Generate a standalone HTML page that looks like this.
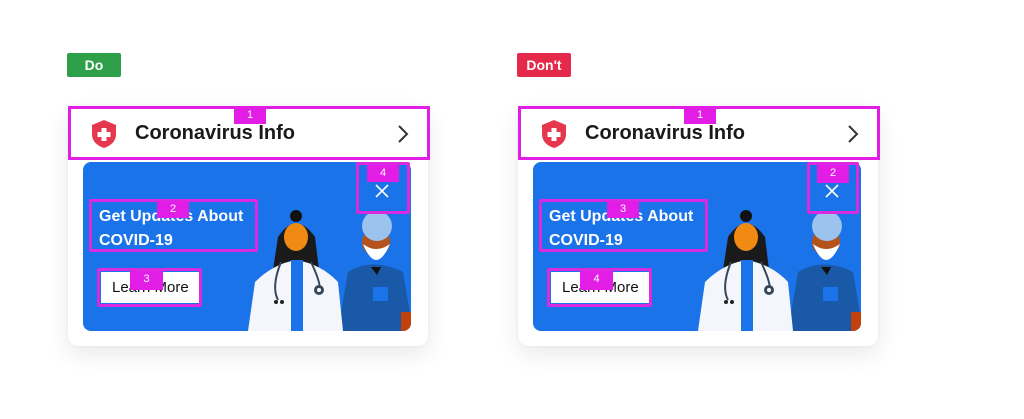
<!DOCTYPE html>
<html><head><meta charset="utf-8"><style>
*{margin:0;padding:0;box-sizing:border-box}
body{width:1024px;height:419px;background:#fff;position:relative;overflow:hidden;font-family:"Liberation Sans",Arial,sans-serif}
.a{position:absolute}
.lbl{color:#fff;font-weight:bold;font-size:14px;text-align:center;line-height:24px;border-radius:2px}
.card{width:360px;height:240px;background:#fff;border-radius:10px;box-shadow:0 8px 24px rgba(0,0,0,.09),0 0 3px rgba(0,0,0,.06)}
.hdr{border:3px solid #e21ee6;background:#fff}
.title{font-size:20px;font-weight:bold;color:#1a1a1a}
.blue{background:#1a73e8;border-radius:8px;overflow:hidden}
.mb{border:3px solid #d92ae0;border-radius:2px}
.tag{background:#e21ee6;color:#fff;font-size:11px;text-align:center;line-height:16px}
.h{color:#fff;font-weight:bold;font-size:16px;line-height:24px}
.btn{background:#fff;color:#111;font-size:15px;line-height:32px}
</style></head><body>

<div class="a lbl" style="left:67px;top:53px;width:54px;height:24px;background:#2ea04a">Do</div>
<div class="a lbl" style="left:517px;top:53px;width:54px;height:24px;background:#e5294b">Don't</div>

<div id="c1">
<div class="a card" style="left:68px;top:106px"></div>
<div class="a blue" style="left:83px;top:162px;width:328px;height:169px">
 <svg width="328" height="169" style="position:absolute;left:0;top:0">
  <path d="M265 110 Q290 95 320 110 L330 169 L255 169Z" fill="#1a58a8"/>
  <rect x="290" y="125" width="15" height="14" fill="#1a73e8"/>
  <rect x="318" y="150" width="10" height="19" fill="#c2410c"/>
  <circle cx="293" cy="80" r="14" fill="#b4541c"/>
  <circle cx="294" cy="64" r="15" fill="#9cc2ee"/>
  <path d="M280 82 Q293 114 307 82 Q293 92 280 82Z" fill="#fff"/>
  <path d="M288 105 L298 105 L294 113Z" fill="#111"/>
  <circle cx="213" cy="54" r="6" fill="#111"/>
  <path d="M195 75 Q213 48 232 75 L236 108 L190 108Z" fill="#1a1a1a"/>
  <ellipse cx="213" cy="75" rx="12" ry="14" fill="#f08a12"/>
  <path d="M165 169 L172 120 Q190 102 213 98 Q238 102 255 120 L260 169Z" fill="#f4f6fb"/>
  <rect x="208" y="98" width="12" height="71" fill="#1a73e8"/>
  <path d="M198 100 Q188 125 195 138 M228 100 Q240 125 236 132" stroke="#33475b" stroke-width="2" fill="none"/>
  <circle cx="236" cy="128" r="5" fill="#33475b"/><circle cx="236" cy="128" r="2" fill="#fff"/>
  <circle cx="193" cy="140" r="2" fill="#222"/><circle cx="199" cy="140" r="2" fill="#222"/>
 </svg>
</div>
<div class="a hdr" style="left:68px;top:106px;width:362px;height:54px"></div>
<svg class="a" style="left:90px;top:119px" width="28" height="30" viewBox="0 0 28 30"><path d="M14 1 L26 6 L26 15 Q26 25 14 29 Q2 25 2 15 L2 6Z" fill="#e5384f"/><rect x="11.5" y="9" width="5" height="13" fill="#fff"/><rect x="7.5" y="13" width="13" height="5" fill="#fff"/></svg>
<div class="a title" style="left:135px;top:122px">Coronavirus Info</div>
<svg class="a" style="left:396px;top:124px" width="14" height="20"><path d="M3 2 L11 10 L3 18" stroke="#333" stroke-width="2" fill="none"/></svg>
<div class="a tag" style="left:234px;top:107px;width:32px;height:17px">1</div>
<div class="a h" style="left:99px;top:205px">Get Updates About<br>COVID-19</div>
<div class="a btn" style="left:101px;top:272px;width:98px;height:31px;padding-left:11px">Learn More</div>
<svg class="a" style="left:375px;top:184px" width="14" height="14"><path d="M1 1L13 13M13 1L1 13" stroke="#fff" stroke-width="1.6"/></svg>
</div>

<div id="c2">
<div class="a card" style="left:518px;top:106px"></div>
<div class="a blue" style="left:533px;top:162px;width:328px;height:169px">
 <svg width="328" height="169" style="position:absolute;left:0;top:0">
  <path d="M265 110 Q290 95 320 110 L330 169 L255 169Z" fill="#1a58a8"/>
  <rect x="290" y="125" width="15" height="14" fill="#1a73e8"/>
  <rect x="318" y="150" width="10" height="19" fill="#c2410c"/>
  <circle cx="293" cy="80" r="14" fill="#b4541c"/>
  <circle cx="294" cy="64" r="15" fill="#9cc2ee"/>
  <path d="M280 82 Q293 114 307 82 Q293 92 280 82Z" fill="#fff"/>
  <path d="M288 105 L298 105 L294 113Z" fill="#111"/>
  <circle cx="213" cy="54" r="6" fill="#111"/>
  <path d="M195 75 Q213 48 232 75 L236 108 L190 108Z" fill="#1a1a1a"/>
  <ellipse cx="213" cy="75" rx="12" ry="14" fill="#f08a12"/>
  <path d="M165 169 L172 120 Q190 102 213 98 Q238 102 255 120 L260 169Z" fill="#f4f6fb"/>
  <rect x="208" y="98" width="12" height="71" fill="#1a73e8"/>
  <path d="M198 100 Q188 125 195 138 M228 100 Q240 125 236 132" stroke="#33475b" stroke-width="2" fill="none"/>
  <circle cx="236" cy="128" r="5" fill="#33475b"/><circle cx="236" cy="128" r="2" fill="#fff"/>
  <circle cx="193" cy="140" r="2" fill="#222"/><circle cx="199" cy="140" r="2" fill="#222"/>
 </svg>
</div>
<div class="a hdr" style="left:518px;top:106px;width:362px;height:54px"></div>
<svg class="a" style="left:540px;top:119px" width="28" height="30" viewBox="0 0 28 30"><path d="M14 1 L26 6 L26 15 Q26 25 14 29 Q2 25 2 15 L2 6Z" fill="#e5384f"/><rect x="11.5" y="9" width="5" height="13" fill="#fff"/><rect x="7.5" y="13" width="13" height="5" fill="#fff"/></svg>
<div class="a title" style="left:585px;top:122px">Coronavirus Info</div>
<svg class="a" style="left:846px;top:124px" width="14" height="20"><path d="M3 2 L11 10 L3 18" stroke="#333" stroke-width="2" fill="none"/></svg>
<div class="a tag" style="left:684px;top:107px;width:32px;height:17px">1</div>
<div class="a h" style="left:549px;top:205px">Get Updates About<br>COVID-19</div>
<div class="a btn" style="left:551px;top:272px;width:98px;height:31px;padding-left:11px">Learn More</div>
<svg class="a" style="left:825px;top:184px" width="14" height="14"><path d="M1 1L13 13M13 1L1 13" stroke="#fff" stroke-width="1.6"/></svg>
</div>

<div class="a mb" style="left:89px;top:199px;width:169px;height:53px"></div>
<div class="a mb" style="left:97px;top:268px;width:105px;height:39px"></div>
<div class="a mb" style="left:356px;top:162px;width:54px;height:52px"></div>
<div class="a tag" style="left:157px;top:201px;width:32px;height:17px">2</div>
<div class="a tag" style="left:130px;top:271px;width:33px;height:19px">3</div>
<div class="a tag" style="left:367px;top:165px;width:32px;height:17px">4</div>
<div class="a mb" style="left:539px;top:199px;width:169px;height:53px"></div>
<div class="a mb" style="left:547px;top:268px;width:105px;height:39px"></div>
<div class="a mb" style="left:807px;top:162px;width:52px;height:52px"></div>
<div class="a tag" style="left:607px;top:201px;width:32px;height:17px">3</div>
<div class="a tag" style="left:580px;top:271px;width:33px;height:19px">4</div>
<div class="a tag" style="left:817px;top:165px;width:32px;height:18px">2</div>
</body></html>
